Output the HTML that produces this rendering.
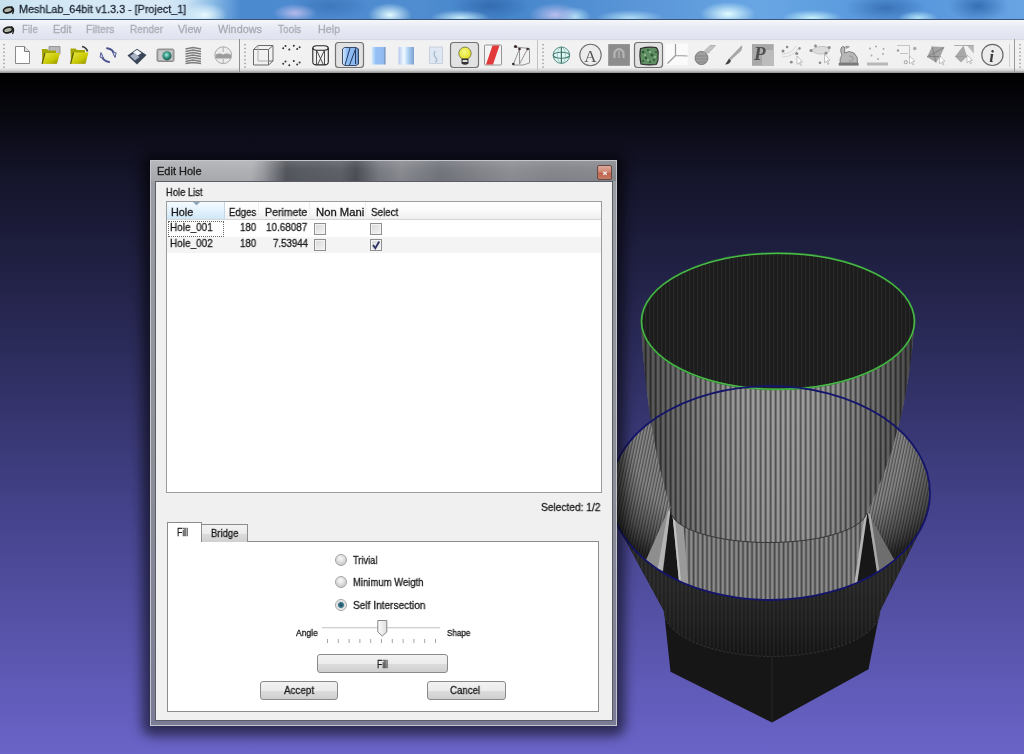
<!DOCTYPE html>
<html><head><meta charset="utf-8">
<style>
*{margin:0;padding:0;box-sizing:border-box}
html,body{width:1024px;height:754px;overflow:hidden;background:#000}
body{position:relative;font-family:"Liberation Sans",sans-serif;color:#222}
.abs{position:absolute}
.t{position:absolute;white-space:nowrap;line-height:1;transform-origin:0 0;will-change:transform;-webkit-text-stroke:0.3px currentColor}
#title{left:0;top:0;width:1024px;height:20px;
 background:
  radial-gradient(ellipse 22px 12px at 205px 15px, rgba(235,252,255,.95), rgba(220,245,255,0)),
  radial-gradient(ellipse 22px 9px at 295px 13px, rgba(200,195,240,.85), rgba(200,195,240,0)),
  radial-gradient(ellipse 22px 12px at 390px 15px, rgba(225,250,255,1), rgba(225,250,255,0)),
  radial-gradient(ellipse 30px 8px at 460px 18px, rgba(210,245,255,.9), rgba(210,245,255,0)),
  radial-gradient(ellipse 26px 12px at 555px 15px, rgba(195,195,240,.9), rgba(195,195,240,0)),
  radial-gradient(ellipse 16px 10px at 575px 17px, rgba(200,245,255,.8), rgba(200,245,255,0)),
  radial-gradient(ellipse 28px 12px at 728px 14px, rgba(225,252,255,1), rgba(225,252,255,0)),
  radial-gradient(ellipse 34px 8px at 630px 18px, rgba(205,245,255,.75), rgba(205,245,255,0)),
  radial-gradient(ellipse 30px 8px at 812px 18px, rgba(210,250,255,.9), rgba(210,250,255,0)),
  radial-gradient(ellipse 20px 7px at 918px 18px, rgba(200,245,255,.8), rgba(200,245,255,0)),
  radial-gradient(ellipse 40px 14px at 490px 6px, rgba(40,90,160,.6), rgba(40,90,160,0)),
  radial-gradient(ellipse 40px 14px at 885px 8px, rgba(40,90,160,.6), rgba(40,90,160,0)),
  radial-gradient(ellipse 30px 16px at 978px 6px, rgba(40,95,165,.75), rgba(40,95,165,0)),
  radial-gradient(ellipse 40px 14px at 330px 6px, rgba(40,90,160,.4), rgba(40,90,160,0)),
  linear-gradient(90deg,#c6e0ee 0,#d2e8f4 40px,#d8e9f6 160px,#c6e0f4 188px,#8cbce6 212px,#4c8ad0 240px,#4f8cd0 420px,#4585ca 500px,#5a96d8 640px,#68a6e4 760px,#5595da 900px,#68a4e4 1024px);
}
#titleline{left:0;top:19px;width:1024px;height:1px;background:#3a5577}
#menubar{left:0;top:20px;width:1024px;height:19px;background:linear-gradient(#f6f7fb,#e8eaf4 40%,#dfe3f0)}
#toolbar{left:0;top:39px;width:1024px;height:34px;background:linear-gradient(#eeeff2,#f2f2f2 10%,#f0f0f0 84%,#d4d4d4 92%,#8e8e8e 100%);border-top:1px solid #d9dbe3}
#viewport{left:0;top:73px;width:1024px;height:681px;background:linear-gradient(#000 0,#14142a 15%,#2b2b5a 40%,#45438c 65%,#6a64c8 100%)}
#dlgshadow{left:142px;top:154px;width:483px;height:582px;border-radius:10px;background:rgba(0,0,0,.55);filter:blur(6px)}
#dlg{left:150px;top:160px;width:467px;height:566px;border:1px solid #c4c6cc;background:linear-gradient(#9c9ea6,#8e9098 50%,#7a7c96)}
#dlgtb{left:151px;top:161px;width:465px;height:20px;background:linear-gradient(rgba(255,255,255,.1),rgba(255,255,255,0) 40%,rgba(0,0,0,.05)),linear-gradient(90deg,#aeb0b4 0,#b0b2b6 100px,#9a9ca2 112px,#55575e 135px,#5a5c64 150px,#60626a 190px,#4e5058 205px,#7a7c84 228px,#8a8c92 250px,#74767e 290px,#84868c 330px,#8e9096 360px,#86888e 400px,#8a8c92 465px)}
#close{left:597px;top:165px;width:15px;height:15px;border:1px solid #6a4a44;border-radius:2px;background:linear-gradient(#dcaa9c,#cf8672 45%,#c06450 55%,#c47a64)}
#client{left:155px;top:181px;width:458px;height:540px;background:#f0f0f0;border:1px solid #5a5c66}
#table{left:166px;top:201px;width:436px;height:292px;background:#fff;border:1px solid #9c9c9c}
.hdr{position:absolute;top:0;height:18px;background:linear-gradient(#ffffff,#fafafa 50%,#eeeff1);border-bottom:1px solid #d5d5d5}
.cb{position:absolute;width:12px;height:12px;border:1px solid #8e8f8f;box-shadow:inset 0 0 0 1px #f4f4f4;background:linear-gradient(135deg,#d8d8d8,#f4f4f4)}
.btn{position:absolute;height:19px;border:1px solid #8a8a8a;border-radius:3px;background:linear-gradient(#f2f2f2 0,#ebebeb 50%,#dddddd 51%,#cfcfcf 100%)}
.radio{position:absolute;width:12px;height:12px;border-radius:50%;border:1px solid #a4a4a4;background:radial-gradient(circle at 45% 35%,#f4f4f4 10%,#d4d4d4 60%,#bcbcbc)}

</style></head><body>
<div id="title" class="abs"></div>
<div id="titleline" class="abs"></div>
<svg class="abs" style="left:2px;top:4px" width="13" height="11" viewBox="0 0 13 11"><ellipse cx="6" cy="6" rx="4.6" ry="2.7" transform="rotate(-14 6 6)" fill="#aeb2a4" stroke="#1e1e1e" stroke-width="1.7"/><path d="M9 2.5 Q12 3.5 11.5 7 Q11 9 10.5 10" fill="none" stroke="#222" stroke-width="1.3"/></svg>
<div id="menubar" class="abs">
 <svg style="position:absolute;left:2px;top:4px" width="13" height="11" viewBox="0 0 13 11"><ellipse cx="6" cy="6" rx="4.6" ry="2.7" transform="rotate(-14 6 6)" fill="#aeb2a4" stroke="#1e1e1e" stroke-width="1.7"/><path d="M9 2.5 Q12 3.5 11.5 7 Q11 9 10.5 10" fill="none" stroke="#222" stroke-width="1.3"/></svg>
</div>
<div id="toolbar" class="abs"></div>
<div id="viewport" class="abs"></div>
<svg class="abs" style="left:0;top:0;will-change:transform" width="1024" height="72" viewBox="0 0 1024 72">
<defs>
 <linearGradient id="gy" x1="0" y1="0" x2="1" y2="1"><stop offset="0" stop-color="#e8e84a"/><stop offset=".6" stop-color="#c8c800"/><stop offset="1" stop-color="#8a8a00"/></linearGradient>
 <linearGradient id="gb" x1="0" y1="0" x2="1" y2="0"><stop offset="0" stop-color="#d8ecfb"/><stop offset=".3" stop-color="#8fbdf6"/><stop offset=".85" stop-color="#8bb6ee"/><stop offset="1" stop-color="#5b7fb0"/></linearGradient>
 <linearGradient id="gb2" x1="0" y1="0" x2="1" y2="0"><stop offset="0" stop-color="#b8c8ee"/><stop offset=".35" stop-color="#f2fbff"/><stop offset=".6" stop-color="#b0d4f6"/><stop offset="1" stop-color="#7d9fd0"/></linearGradient>
 <radialGradient id="gbulb" cx=".45" cy=".4" r=".6"><stop offset="0" stop-color="#f8f888"/><stop offset="1" stop-color="#e0e020"/></radialGradient>
 <radialGradient id="gteal" cx=".45" cy=".4" r=".6"><stop offset="0" stop-color="#a8f0e0"/><stop offset=".6" stop-color="#2e8a78"/><stop offset="1" stop-color="#1e5a50"/></radialGradient>
</defs>
<!-- handles -->
<g fill="#b2b2b2"><rect x="3" y="44.00" width="2" height="1.4"/><rect x="3" y="47.75" width="2" height="1.4"/><rect x="3" y="51.50" width="2" height="1.4"/><rect x="3" y="55.25" width="2" height="1.4"/><rect x="3" y="59.00" width="2" height="1.4"/><rect x="3" y="62.75" width="2" height="1.4"/><rect x="3" y="66.50" width="2" height="1.4"/><rect x="244" y="44.00" width="2" height="1.4"/><rect x="244" y="47.75" width="2" height="1.4"/><rect x="244" y="51.50" width="2" height="1.4"/><rect x="244" y="55.25" width="2" height="1.4"/><rect x="244" y="59.00" width="2" height="1.4"/><rect x="244" y="62.75" width="2" height="1.4"/><rect x="244" y="66.50" width="2" height="1.4"/><rect x="542" y="44.00" width="2" height="1.4"/><rect x="542" y="47.75" width="2" height="1.4"/><rect x="542" y="51.50" width="2" height="1.4"/><rect x="542" y="55.25" width="2" height="1.4"/><rect x="542" y="59.00" width="2" height="1.4"/><rect x="542" y="62.75" width="2" height="1.4"/><rect x="542" y="66.50" width="2" height="1.4"/><rect x="1019" y="44.00" width="2" height="1.4"/><rect x="1019" y="47.75" width="2" height="1.4"/><rect x="1019" y="51.50" width="2" height="1.4"/><rect x="1019" y="55.25" width="2" height="1.4"/><rect x="1019" y="59.00" width="2" height="1.4"/><rect x="1019" y="62.75" width="2" height="1.4"/><rect x="1019" y="66.50" width="2" height="1.4"/></g>
<!-- separators -->
<rect x="239" y="39" width="1" height="33" fill="#8e8e8e"/>
<rect x="537" y="40" width="1" height="32" fill="#c2c2c2"/>
<rect x="1009" y="44" width="1" height="23" fill="#d0d0d0"/>
<rect x="1014" y="39" width="1" height="33" fill="#9a9a9a"/>
<!-- pressed buttons -->
<rect x="335.5" y="42.5" width="28" height="25" rx="3" fill="#e2e2e2" stroke="#727272" stroke-width="1.2"/>
<rect x="450.5" y="42.5" width="28" height="25" rx="3" fill="#e2e2e2" stroke="#727272" stroke-width="1.2"/>
<rect x="634.5" y="42.5" width="28" height="25" rx="3" fill="#e2e2e2" stroke="#727272" stroke-width="1.2"/>
<!-- 1 new file -->
<path d="M15.5 46.5 H24.5 L29.5 51.5 V63.5 H15.5Z" fill="#fdfdfd" stroke="#8a8a8a" stroke-width="1"/>
<path d="M24.5 46.5 V51.5 H29.5" fill="#e0e0e0" stroke="#7a7a7a" stroke-width="1"/>
<!-- 2 open project -->
<path d="M49 46.5 H60 V54 H49Z" fill="#b8b8bc" stroke="#888" stroke-width=".8"/>
<path d="M41.8 49 H47 L48.5 50.5 H56 V63.5 H42.5Z" fill="#a6a600"/>
<path d="M45 53 H60 L57 63.8 H42Z" fill="url(#gy)"/>
<path d="M42 63.8 L45 53" stroke="#5a5a00" stroke-width="1.2" fill="none"/>
<!-- 3 open w arrow -->
<path d="M70.5 48.5 H75.5 L77 50 H85 V63.5 H71Z" fill="#a6a600"/>
<path d="M73.5 52.5 H88.5 L85.5 63.8 H70.5Z" fill="url(#gy)"/>
<path d="M70.5 63.8 L73.5 52.5" stroke="#5a5a00" stroke-width="1.2" fill="none"/>
<path d="M82 46.5 Q86.5 47.5 87.5 51.5" stroke="#333" stroke-width="1.6" fill="none"/>
<!-- 4 reload -->
<path d="M107 48.2 Q113.5 49 115 56" stroke="#4e5590" stroke-width="2" fill="none" stroke-linecap="round"/>
<path d="M112.5 52 L115 57.5 L116.2 52.8Z" fill="#c8cce8" stroke="#4e5590" stroke-width=".8"/>
<path d="M109 62 Q102.5 61 101 54" stroke="#4e5590" stroke-width="2" fill="none" stroke-linecap="round"/>
<path d="M103.5 58 L101 52.5 L100 57.2Z" fill="#c8cce8" stroke="#4e5590" stroke-width=".8"/>
<!-- 5 floppy -->
<path d="M127.5 55.5 L137 48.8 L146.5 55 L137 64.5Z" fill="#3a4658"/>
<path d="M133 52.5 L137 49.8 L141.5 53 L137.5 55.8Z" fill="#f4f6fa"/>
<path d="M130 56 L134.5 53 L139.5 57 L135 60.5Z" fill="#a8b2c2"/>
<!-- 6 camera -->
<rect x="157" y="49" width="17" height="12.5" rx="1.5" fill="#a8a8a8" stroke="#7a7a7a" stroke-width=".8"/>
<rect x="158.5" y="50.5" width="14" height="9.5" fill="#c8c8c8"/>
<circle cx="167" cy="55.8" r="4.6" fill="url(#gteal)"/>
<!-- 7 layers -->
<g stroke="#7e7e7e" stroke-width="1.6" fill="none">
 <path d="M185.5 49 L193 47.5 L201 49"/><path d="M185.5 51.5 L193 50 L201 51.5"/><path d="M185.5 54 L193 52.5 L201 54"/><path d="M185.5 56.5 L193 55 L201 56.5"/><path d="M185.5 59 L193 57.5 L201 59"/><path d="M185.5 61.5 L193 60 L201 61.5"/><path d="M185.5 63.5 L193 62.5 L201 63.5"/>
</g>
<!-- 8 gray globe -->
<circle cx="223.2" cy="55.2" r="8.4" fill="#ececec" stroke="#a8a8a8" stroke-width="1"/>
<path d="M215.5 55 Q219 52.5 223 54.5 Q227 52.5 231 55 V58.5 H215.5Z" fill="#9c9c9c"/>
<path d="M223.2 47 V52 M223.2 59 V63.5" stroke="#b0b0b0" stroke-width="1"/>
<!-- 9 bbox cube -->
<g stroke="#6a6a6a" stroke-width="1" fill="none">
 <path d="M253.5 49.5 H268.5 V65 H253.5Z"/><path d="M258 45.5 H273 V61 H268.5"/><path d="M253.5 49.5 L258 45.5 M268.5 49.5 L273 45.5 M268.5 65 L273 61"/>
 <path d="M258 45.5 V61 H268.5" stroke="#b0b0b0"/>
</g>
<!-- 10 points -->
<g fill="#333">
 <circle cx="285.5" cy="46" r="1"/><circle cx="283.2" cy="48.3" r="1"/><circle cx="289.3" cy="49.6" r="1"/><circle cx="293.8" cy="45.7" r="1"/><circle cx="299.6" cy="47.2" r="1"/><circle cx="297.2" cy="49.1" r="1"/>
 <circle cx="285.5" cy="61.6" r="1"/><circle cx="283.2" cy="63.7" r="1"/><circle cx="289.3" cy="65.2" r="1"/><circle cx="293.8" cy="61" r="1"/><circle cx="299.6" cy="62.4" r="1"/><circle cx="297.2" cy="64.6" r="1"/>
</g>
<!-- 11 wireframe -->
<g stroke="#262626" stroke-width="1.1" fill="none">
 <path d="M312.8 48 V62.5 M328.3 48 V62.5"/>
 <path d="M312.8 48 Q313 46 316.5 45.8 H324.5 Q328 46 328.3 48 Q328 50 324.5 50.2 H316.5 Q313 50 312.8 48Z"/>
 <path d="M312.8 62.5 Q313 64.8 316.5 64.9 H324.5 Q328 64.8 328.3 62.5"/>
 <path d="M316.5 50.2 L323.5 64.9 M324.5 50.2 L317.5 64.9 M316.5 50.2 V64.9 M324.5 50.2 V64.9" stroke="#3a3a3a" stroke-width=".9"/>
</g>
<!-- 12 flat lines (pressed) -->
<path d="M342.5 49 L344.5 47.5 H356 L358.5 49 V64 L356 65.5 H344.5 L342.5 64Z" fill="url(#gb)" stroke="#2a3a5a" stroke-width=".9"/>
<path d="M345 65 L350 48 M349.5 65 L356 48 M355.5 49 V64" stroke="#23385a" stroke-width="1" fill="none"/>
<!-- 13 flat blue -->
<path d="M371.5 47 H385.5 V64.5 H371.5Z" fill="url(#gb)" opacity=".95"/>
<!-- 14 smooth -->
<path d="M398.5 47 H414 V64.5 H398.5Z" fill="url(#gb2)"/>
<!-- 15 texture faint -->
<path d="M429.5 47 H442.5 V63.5 H429.5Z" fill="#dfe8f2" stroke="#c0c8d8" stroke-width=".8"/>
<path d="M435 51 Q433 55 436 58 Q438 61 435 62" stroke="#a8bcd0" stroke-width="1.4" fill="none"/>
<!-- 16 bulb (pressed) -->
<circle cx="465" cy="53.3" r="6.2" fill="url(#gbulb)" stroke="#6a6a40" stroke-width=".8"/>
<path d="M461.5 58.5 H468.5 V63.5 Q465 66 461.5 63.5Z" fill="#333"/>
<rect x="462.6" y="60" width="4.8" height="2" fill="#ddd"/>
<!-- 17 red backface -->
<rect x="484.5" y="45" width="17" height="20" rx="1" fill="#f4f4f4" stroke="#8a8a8a" stroke-width=".9"/>
<path d="M486 64.5 L492.5 45.5 H499.5 L493 64.5Z" fill="#e23a3a"/>
<!-- 18 selected vertices -->
<g stroke="#8a8a8a" stroke-width=".9" fill="none">
 <path d="M515 47 L529.5 48.5 V63 L523 65 H513.5 M513.5 64 L519.5 49 V64 M519.5 64 L527.5 49"/>
</g>
<g fill="#3a2a2a"><circle cx="515.5" cy="46.5" r="1.6"/><circle cx="519.5" cy="49" r="1.3"/><circle cx="527.7" cy="49" r="1.3"/><circle cx="513.3" cy="64" r="1.3"/></g>
<!-- 19 teal globe -->
<circle cx="561.4" cy="55.2" r="8.2" fill="#e2f8f6" stroke="#4e8a80" stroke-width="1"/>
<ellipse cx="561.4" cy="55.2" rx="8.2" ry="3" fill="none" stroke="#4a8078" stroke-width="1.1"/>
<path d="M561.4 47 V63.4" stroke="#3e6e66" stroke-width="1.2"/>
<ellipse cx="561.4" cy="55.2" rx="4" ry="8.2" fill="none" stroke="#7aa8a0" stroke-width=".6"/>
<!-- 20 A circle -->
<circle cx="590.5" cy="55" r="10.7" fill="#ececec" stroke="#6e6e6e" stroke-width="1.1"/>
<text x="590.5" y="61.6" font-family="Liberation Serif" font-size="17" fill="#555" text-anchor="middle">A</text>
<!-- 21 gray square -->
<rect x="608.2" y="44.1" width="21.7" height="21.7" fill="#8c8c8c"/>
<path d="M614.5 58 V52 Q619 46 623.5 52 V58" stroke="#b8b8b8" stroke-width="2" fill="none"/>
<path d="M619 51 V58" stroke="#b0b0b0" stroke-width="1.5"/>
<!-- 22 green -->
<path d="M640.5 48.5 Q648 46.5 656 47.5 Q659 50 658 56 Q658.5 62 656 64.5 Q648 65.5 641 64 Q639 56 640.5 48.5Z" fill="#5e8e62" stroke="#2a2a2a" stroke-width="1.1"/>
<g fill="#2e5232" opacity=".9"><circle cx="643" cy="52" r="1.3"/><circle cx="648" cy="50" r="1"/><circle cx="652" cy="55" r="1.5"/><circle cx="646" cy="58" r="1.2"/><circle cx="654" cy="60" r="1.1"/><circle cx="650" cy="62" r="1"/><circle cx="656" cy="52" r="1"/><circle cx="643" cy="61" r="1"/></g>
<g fill="#a8cca8" opacity=".8"><circle cx="645" cy="55" r="1"/><circle cx="650" cy="52" r="1"/><circle cx="655" cy="57" r="1"/><circle cx="648" cy="60" r="1"/></g>
<!-- 23 axes -->
<rect x="665.3" y="43.5" width="22.5" height="21.7" fill="#fafafa"/>
<path d="M675.5 44 V55.5 L687.5 56 M675.5 55.5 L667.5 63.5" stroke="#9a9a9a" stroke-width="1.2" fill="none"/>
<!-- 24 apple paint -->
<ellipse cx="701.5" cy="58" rx="6.4" ry="6.6" fill="#a0a0a0" stroke="#6a6a6a" stroke-width=".8"/>
<path d="M696 56 H707 M695.5 59 H707.5 M696.5 62 H706.5" stroke="#7a7a7a" stroke-width=".7"/>
<path d="M703.5 52 L710 45.5 H715.5 L708.5 53Z" fill="#c4c4c4" stroke="#9a9a9a" stroke-width=".6"/>
<!-- 25 brush -->
<path d="M741.5 45.6 Q743.5 46 741 51 L731 60 L729 58.5 Z" fill="#a8a8a8"/>
<path d="M729 58.5 L731 60.5 Q730 64.5 725 64.6 Q727 62 729 58.5Z" fill="#444"/>
<!-- 26 P -->
<rect x="752" y="44.1" width="21.7" height="21.7" fill="#a8a8a8"/>
<rect x="762" y="50" width="11.7" height="15.8" fill="#bcbcbc"/>
<text x="754" y="59.5" font-family="Liberation Serif" font-size="19" font-weight="bold" font-style="italic" fill="#505050">P</text>
<!-- 27 select pts -->
<g fill="#8a8a8a"><circle cx="787.1" cy="47" r="1.3"/><circle cx="783" cy="51" r="1.5"/><circle cx="799.4" cy="48.4" r="1.3"/><circle cx="796.7" cy="53.5" r="1.5"/><circle cx="791.3" cy="62.2" r="1.4"/></g>
<path d="M782 54 Q792 54 796 46 M782 57 Q794 57 799 47" stroke="#d0d0d0" stroke-width=".8" fill="none"/>
<path d="M797 56 V64.5 L799 62.5 L800.5 65.5 L801.5 65 L800 62 L802.5 61.8Z" fill="#fff" stroke="#9a9a9a" stroke-width=".6"/>
<!-- 28 select connected -->
<path d="M811 50.6 Q818 44 829 47.6 Q830 53 826 53.2 Q818 56 811 50.6Z" fill="#dcdcdc" stroke="#b0b0b0" stroke-width=".6"/>
<g fill="#8a8a8a"><circle cx="815.5" cy="46" r="1.4"/><circle cx="811" cy="50.6" r="1.5"/><circle cx="829.2" cy="47.6" r="1.5"/><circle cx="826" cy="53.2" r="1.4"/><circle cx="820" cy="62.8" r="1.3"/></g>
<path d="M824.5 54 V63 L826.5 61 L828 64.5 L829 64 L827.5 60.5 L830 60.3Z" fill="#fff" stroke="#9a9a9a" stroke-width=".6"/>
<!-- 29 bunny -->
<path d="M840 63 Q839.5 58 842 55 Q840 52 841 48 Q842.5 45.5 844.5 47 Q845 50 844.5 53 Q849 50 854 53 Q858.5 57 857.5 63Z" fill="#b8b8b8" stroke="#6e6e6e" stroke-width=".8"/>
<path d="M845 46.5 Q848 45 850 47 L846 49Z" fill="#a0a0a0"/>
<path d="M849 56 Q852 55 853.5 59 Q852 62 849 61" fill="none" stroke="#8a8a8a" stroke-width=".8"/>
<rect x="838.7" y="63" width="19.9" height="2.6" fill="#7a7a7a"/>
<!-- 30 reference -->
<g fill="#a8a8a8"><circle cx="870" cy="48.5" r="1"/><circle cx="876" cy="46.5" r="1"/><circle cx="883.5" cy="49" r="1"/><circle cx="871.5" cy="55.5" r="1"/><circle cx="883" cy="54" r="1"/><circle cx="878" cy="59" r="1"/></g>
<rect x="867" y="62.5" width="21" height="3" fill="#b8b8b8"/>
<!-- 31 select vertex -->
<path d="M897 45.5 H909.5 M909.5 45.5 V58 M900 53.5 H908" stroke="#b8b8b8" stroke-width=".8" fill="none"/>
<circle cx="898" cy="50.5" r="1.2" fill="#9a9a9a"/><circle cx="914.8" cy="48.5" r="1.7" fill="#aaa"/><circle cx="905.8" cy="62.2" r="1.6" fill="none" stroke="#a0a0a0"/>
<path d="M909.5 56 V64 L911.5 62 L913 65 L914 64.5 L912.5 61.5 L915 61.2Z" fill="#fff" stroke="#a0a0a0" stroke-width=".6"/>
<!-- 32 select faces -->
<path d="M927 57 L932 46.5 L944.5 47 L940.5 56 L936 62.5Z" fill="#a4a4a4"/>
<path d="M927 57 L944 47.5 M932 46.5 L936 62.5 M929 56.5 H941" stroke="#7a7a7a" stroke-width=".8" fill="none"/>
<path d="M939.5 56 V64 L941.5 62 L943 65 L944 64.5 L942.5 61.5 L945 61.2Z" fill="#fff" stroke="#a0a0a0" stroke-width=".6"/>
<!-- 33 select faces 2 -->
<path d="M955 56.5 L963.5 45.5 L967 56.5 L961 62.5Z" fill="#a8a8a8"/>
<path d="M967 45.5 H973.8 V53.5Z" fill="#b8b8b8"/>
<path d="M954.3 45.5 H973.8 M955 56.5 H967" stroke="#9a9a9a" stroke-width=".8" fill="none"/>
<path d="M967 55 V63 L969 61 L970.5 64 L971.5 63.5 L970 60.5 L972.5 60.2Z" fill="#fff" stroke="#a0a0a0" stroke-width=".6"/>
<!-- 34 info -->
<circle cx="992.4" cy="54.9" r="10.6" fill="#ececec" stroke="#6a6a6a" stroke-width="1.2"/>
<text x="991.5" y="61.5" font-family="Liberation Serif" font-size="17" font-weight="bold" font-style="italic" fill="#3a3a3a" text-anchor="middle">i</text>
</svg>
<svg class="abs" style="left:0;top:0" width="1024" height="754">
<defs>
 <pattern id="strL" width="5" height="10" patternUnits="userSpaceOnUse"><rect width="5" height="10" fill="#4e4e4e"/><rect x="1.6" width="3" height="10" fill="#9a9a9a"/></pattern>
 <pattern id="strM" width="4.5" height="10" patternUnits="userSpaceOnUse"><rect width="4.5" height="10" fill="#484848"/><rect x="1.5" width="2.6" height="10" fill="#8c8c8c"/></pattern>
 <pattern id="strB" width="3" height="10" patternUnits="userSpaceOnUse" patternTransform="skewX(-12)"><rect width="3" height="10" fill="#505050"/><rect x="1" width="1.6" height="10" fill="#8c8c8c"/></pattern>
 <pattern id="strD" width="4" height="10" patternUnits="userSpaceOnUse"><rect width="4" height="10" fill="#171717"/><rect x="1" width="1.6" height="10" fill="#242424"/></pattern>
 <pattern id="strT" width="4" height="10" patternUnits="userSpaceOnUse"><rect width="4" height="10" fill="#1c1c1c"/><rect x="1" width="1.2" height="10" fill="#282828"/></pattern>
 <linearGradient id="frsh" x1="0" y1="500" x2="0" y2="660" gradientUnits="userSpaceOnUse"><stop offset="0" stop-color="#fff" stop-opacity=".04"/><stop offset="1" stop-color="#000" stop-opacity=".2"/></linearGradient>
 <linearGradient id="cylsh" x1="640" x2="915" gradientUnits="userSpaceOnUse"><stop offset="0" stop-color="#000" stop-opacity=".5"/><stop offset=".2" stop-color="#000" stop-opacity=".18"/><stop offset=".5" stop-color="#fff" stop-opacity=".03"/><stop offset=".8" stop-color="#000" stop-opacity=".18"/><stop offset="1" stop-color="#000" stop-opacity=".55"/></linearGradient>
 <linearGradient id="cylv" x1="0" y1="321" x2="0" y2="540" gradientUnits="userSpaceOnUse"><stop offset="0" stop-color="#000" stop-opacity=".0"/><stop offset=".4" stop-color="#000" stop-opacity="0"/><stop offset="1" stop-color="#000" stop-opacity=".05"/></linearGradient>
 <radialGradient id="rimsh" cx=".5" cy=".3" r=".62"><stop offset="0" stop-color="#000" stop-opacity="0"/><stop offset=".68" stop-color="#000" stop-opacity="0"/><stop offset=".88" stop-color="#000" stop-opacity=".42"/><stop offset="1" stop-color="#000" stop-opacity=".72"/></radialGradient>
 <clipPath id="cpBlue"><ellipse cx="770" cy="493" rx="160" ry="107"/></clipPath>
</defs>
<!-- frustum + prism silhouette -->
<path d="M619.7 529.6 L664 611 L670.5 671.7 L772 722.5 L868.5 669.2 L880 611 L921.9 526.7 Z" fill="#161616"/>
<!-- frustum front surface -->
<path d="M619.7 529.6 A160 107 0 0 0 921.9 526.7 L880 611 A107 45 0 0 1 664 611 Z" fill="url(#strD)"/>
<path d="M619.7 529.6 A160 107 0 0 0 921.9 526.7 L880 611 A107 45 0 0 1 664 611 Z" fill="url(#frsh)"/>
<path d="M664 611 A107 45 0 0 0 880 611" fill="none" stroke="#3a3a3a" stroke-width="1" stroke-dasharray="2 2"/>
<path d="M772 656 V722" stroke="#262626" stroke-width="1"/>
<!-- blue ellipse interior -->
<g clip-path="url(#cpBlue)">
 <rect x="608" y="384" width="324" height="218" fill="url(#strB)"/>
 <ellipse cx="770" cy="493" rx="160" ry="107" fill="url(#rimsh)"/>
 <!-- lower inner region -->
 <path d="M669 508 L690 600 L855 600 L867 512 Z" fill="url(#strM)"/>
 <!-- slivers left -->
 <path d="M669.3 507.5 L646 560 L664 575 L670.4 510.7Z" fill="#8e8e8e"/>
 <path d="M668 511 L671 511.5 L662 574 L657.5 570Z" fill="#b4b4b4"/>
 <path d="M670.4 510.7 L662 580 L682 592 L672 511Z" fill="#171717"/>
 <path d="M672 510 L682 507.5 L689 592 L680 592Z" fill="#9a9a9a"/>
 <path d="M672 510 L674 509 L682 592 L680 592Z" fill="#c4c4c4"/>
 <!-- slivers right -->
 <path d="M866.3 512 L853 590 L878 580 L868 513Z" fill="#171717"/>
 <path d="M865 512 L867.5 512.5 L856.5 588 L853.5 588Z" fill="#b4b4b4"/>
 <path d="M868 513 L895 561 L878 575Z" fill="#6e6e6e"/>
 <path d="M868 513 L870.5 514 L880 575 L877.5 576Z" fill="#a8a8a8"/>
</g>
<!-- upper cylinder -->
<path d="M640.5 321 Q648 440 671 508 A98 32 0 0 0 866.7 513 Q908 430 914.5 321 Z" fill="url(#strL)"/>
<path d="M640.5 321 Q648 440 671 508 A98 32 0 0 0 866.7 513 Q908 430 914.5 321 Z" fill="url(#cylsh)"/>
<path d="M640.5 321 Q648 440 671 508 A98 32 0 0 0 866.7 513 Q908 430 914.5 321 Z" fill="url(#cylv)"/>
<path d="M671 508 A98 32 0 0 0 866.7 513" fill="none" stroke="#363636" stroke-width="1"/>
<!-- top ellipse interior -->
<ellipse cx="778" cy="321.3" rx="136.5" ry="68" fill="url(#strT)"/>
<ellipse cx="778" cy="321.3" rx="136.5" ry="68" fill="none" stroke="#2e8a2e" stroke-width="2"/>
<ellipse cx="778" cy="321.3" rx="136.5" ry="68" fill="none" stroke="#5ad05a" stroke-width=".8"/>
<!-- blue rim -->
<ellipse cx="770" cy="493" rx="160" ry="107" fill="none" stroke="#14146a" stroke-width="1.8"/>
</svg>

<div id="dlgshadow" class="abs"></div>
<div id="dlg" class="abs"></div>
<div id="dlgtb" class="abs"></div>
<div id="close" class="abs"><svg style="position:absolute;left:3px;top:3px" width="8" height="8"><path d="M2.3 2.8 L5.7 5.8 M5.7 2.8 L2.3 5.8" stroke="#f4eeee" stroke-width="1.4"/></svg></div>
<div id="client" class="abs"></div>
<div id="table" class="abs">
 <div class="hdr" style="left:0;width:58px;background:linear-gradient(#f4fbff,#e3f2fc 50%,#cfe7f8);border-right:1px solid #c5d8e8"></div>
 <div class="hdr" style="left:58px;width:34px;border-right:1px solid #ededed"></div>
 <div class="hdr" style="left:92px;width:51px;border-right:1px solid #ededed"></div>
 <div class="hdr" style="left:143px;width:56px;border-right:1px solid #ededed"></div>
 <div class="hdr" style="left:199px;width:235px"></div>
 <svg style="position:absolute;left:26px;top:0" width="8" height="5"><path d="M0 0 H7 L3.5 3.5Z" fill="#8aa6b8"/></svg>
 <div style="position:absolute;left:0;top:35px;width:434px;height:16px;background:#f4f4f4"></div>
 <div style="position:absolute;left:1px;top:19px;width:56px;height:16px;border:1px dotted #666"></div>
</div>
<div class="cb" style="left:314px;top:223px"></div>
<div class="cb" style="left:314px;top:239px"></div>
<div class="cb" style="left:370px;top:223px"></div>
<div class="cb" style="left:370px;top:239px"><svg style="position:absolute;left:0;top:0" width="10" height="10"><path d="M2 5 L4.3 8.2 L8.2 1.5" stroke="#34386a" stroke-width="1.9" fill="none"/></svg></div>
<div class="abs" style="left:167px;top:541px;width:432px;height:171px;background:#fff;border:1px solid #8c8c8c"></div>
<div class="abs" style="left:201px;top:524px;width:47px;height:18px;border:1px solid #8c8c8c;border-bottom:none;background:linear-gradient(#f2f2f2,#ebebeb 50%,#dcdcdc 51%,#d0d0d0)"></div>
<div class="abs" style="left:167px;top:522px;width:35px;height:20px;border:1px solid #8c8c8c;border-bottom:none;background:#fff"></div>
<div class="radio" style="left:335px;top:553.5px"></div>
<div class="radio" style="left:335px;top:576px"></div>
<div class="radio" style="left:335px;top:599px;background:radial-gradient(circle at 50% 50%,#1a4a5a 0,#3a7a90 2.5px,#d8d8d8 3.5px,#f0f0f0 5px)"></div>
<div class="abs" style="left:322px;top:627px;width:118px;height:2px;background:#d0d0d0;border-bottom:1px solid #f0f0f0"></div>
<svg class="abs" style="left:320px;top:618px" width="124" height="28">
 <g stroke="#a4a4a4" stroke-width="1"><path d="M7.5 21 V25 M18.3 21 V25 M29.1 21 V25 M39.9 21 V25 M50.7 21 V25 M61.5 21 V25 M72.3 21 V25 M83.1 21 V25 M93.9 21 V25 M104.7 21 V25 M115.5 21 V25"/></g>
 <defs><linearGradient id="hg" x1="0" x2="1"><stop offset="0" stop-color="#fdfdfd"/><stop offset="1" stop-color="#dedede"/></linearGradient></defs><path d="M57.8 2.5 H66.8 V14 L62.3 18 L57.8 14Z" fill="url(#hg)" stroke="#858585" stroke-width="1"/>
</svg>
<div class="btn" style="left:317px;top:654px;width:131px"></div>
<div class="btn" style="left:260px;top:681px;width:78px"></div>
<div class="btn" style="left:427px;top:681px;width:79px"></div>
<div class="t" style="left:18.80px;top:4.49px;font-size:11px;color:#1e2532;transform:scaleX(0.980);">MeshLab_64bit v1.3.3 - [Project_1]</div>
<div class="t" style="left:22.00px;top:24.46px;font-size:10.8px;color:#a9abb5;transform:scaleX(0.908);">File</div>
<div class="t" style="left:52.70px;top:24.46px;font-size:10.8px;color:#a9abb5;transform:scaleX(0.994);">Edit</div>
<div class="t" style="left:86.00px;top:24.46px;font-size:10.8px;color:#a9abb5;transform:scaleX(0.967);">Filters</div>
<div class="t" style="left:130.00px;top:24.46px;font-size:10.8px;color:#a9abb5;transform:scaleX(0.933);">Render</div>
<div class="t" style="left:178.00px;top:24.46px;font-size:10.8px;color:#a9abb5;transform:scaleX(1.008);">View</div>
<div class="t" style="left:217.50px;top:24.46px;font-size:10.8px;color:#a9abb5;transform:scaleX(1.002);">Windows</div>
<div class="t" style="left:278.00px;top:24.46px;font-size:10.8px;color:#a9abb5;transform:scaleX(0.922);">Tools</div>
<div class="t" style="left:317.60px;top:24.46px;font-size:10.8px;color:#a9abb5;transform:scaleX(0.991);">Help</div>
<div class="t" style="left:157.00px;top:165.69px;font-size:11px;color:#1c1c1c;transform:scaleX(1.000);">Edit Hole</div>
<div class="t" style="left:165.90px;top:186.73px;font-size:10.6px;color:#1a1a1a;transform:scaleX(0.887);">Hole List</div>
<div class="t" style="left:170.80px;top:207.16px;font-size:10.8px;color:#1a1a1a;transform:scaleX(1.004);">Hole</div>
<div class="t" style="left:229.40px;top:207.16px;font-size:10.8px;color:#1a1a1a;transform:scaleX(0.887);">Edges</div>
<div class="t" style="left:264.50px;top:207.16px;font-size:10.8px;color:#1a1a1a;transform:scaleX(0.977);">Perimete</div>
<div class="t" style="left:315.70px;top:207.16px;font-size:10.8px;color:#1a1a1a;transform:scaleX(1.043);">Non Mani</div>
<div class="t" style="left:371.40px;top:207.16px;font-size:10.8px;color:#1a1a1a;transform:scaleX(0.910);">Select</div>
<div class="t" style="left:170.10px;top:222.46px;font-size:10.8px;color:#1a1a1a;transform:scaleX(0.924);">Hole_001</div>
<div class="t" style="left:170.10px;top:238.36px;font-size:10.8px;color:#1a1a1a;transform:scaleX(0.924);">Hole_002</div>
<div class="t" style="left:240.40px;top:222.46px;font-size:10.8px;color:#1a1a1a;transform:scaleX(0.900);">180</div>
<div class="t" style="left:240.40px;top:238.36px;font-size:10.8px;color:#1a1a1a;transform:scaleX(0.900);">180</div>
<div class="t" style="left:266.30px;top:222.46px;font-size:10.8px;color:#1a1a1a;transform:scaleX(0.917);">10.68087</div>
<div class="t" style="left:272.50px;top:238.36px;font-size:10.8px;color:#1a1a1a;transform:scaleX(0.899);">7.53944</div>
<div class="t" style="left:540.80px;top:501.56px;font-size:10.8px;color:#1a1a1a;transform:scaleX(0.943);">Selected: 1/2</div>
<div class="t" style="left:177.30px;top:527.03px;font-size:10.6px;color:#1a1a1a;transform:scaleX(0.812);">Fill</div>
<div class="t" style="left:210.70px;top:527.63px;font-size:10.6px;color:#1a1a1a;transform:scaleX(0.895);">Bridge</div>
<div class="t" style="left:352.90px;top:554.53px;font-size:10.6px;color:#1a1a1a;transform:scaleX(0.876);">Trivial</div>
<div class="t" style="left:352.90px;top:577.03px;font-size:10.6px;color:#1a1a1a;transform:scaleX(0.896);">Minimum Weigth</div>
<div class="t" style="left:352.90px;top:600.03px;font-size:10.6px;color:#1a1a1a;transform:scaleX(0.954);">Self Intersection</div>
<div class="t" style="left:295.60px;top:628.72px;font-size:8.6px;color:#1a1a1a;transform:scaleX(0.986);">Angle</div>
<div class="t" style="left:447.30px;top:628.72px;font-size:8.6px;color:#1a1a1a;transform:scaleX(0.941);">Shape</div>
<div class="t" style="left:377.10px;top:658.63px;font-size:10.6px;color:#1a1a1a;transform:scaleX(0.804);">Fill</div>
<div class="t" style="left:283.60px;top:685.43px;font-size:10.6px;color:#1a1a1a;transform:scaleX(0.928);">Accept</div>
<div class="t" style="left:450.40px;top:685.43px;font-size:10.6px;color:#1a1a1a;transform:scaleX(0.913);">Cancel</div>

</body></html>
